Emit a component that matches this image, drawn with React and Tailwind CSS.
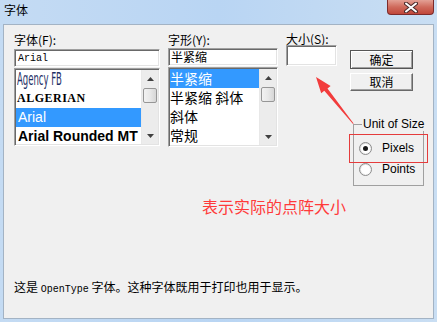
import React from 'react';

const cjk = "font-['SimSun','Noto_Sans_CJK_SC',sans-serif]";

function ScrollBar() {
  return (
    <div className="w-[17px] h-full flex flex-col bg-[#ececec] border-l border-[#e8e8e8]">
      <div className="h-[17px] flex items-center justify-center">
        <svg width="7" height="4" viewBox="0 0 7 4"><polygon points="3.5,0 7,4 0,4" fill="#404040" /></svg>
      </div>
      <div className="mx-[1px] mt-[1px] h-[15px] rounded-[2px] border border-[#969696] bg-gradient-to-r from-[#f2f2f2] via-[#e8e8e8] to-[#d6d6d6]" />
      <div className="flex-1" />
      <div className="h-[17px] flex items-center justify-center">
        <svg width="7" height="4" viewBox="0 0 7 4"><polygon points="0,0 7,0 3.5,4" fill="#404040" /></svg>
      </div>
    </div>
  );
}

function Sunken({ className, children }) {
  return (
    <div className={`border border-t-[#a0a0a0] border-l-[#a0a0a0] border-r-white border-b-white shadow-[inset_1px_1px_0_#696969,inset_-1px_-1px_0_#e3e3e3] bg-white ${className}`}>
      {children}
    </div>
  );
}

function Radio({ checked }) {
  return (
    <div className="w-[13px] h-[13px] rounded-full border border-[#8c8c8c] bg-gradient-to-br from-[#d8d8d8] to-white flex items-center justify-center">
      <div className="w-[9px] h-[9px] rounded-full bg-white flex items-center justify-center">
        {checked && <div className="w-[5px] h-[5px] rounded-full bg-[#1a1a1a]" />}
      </div>
    </div>
  );
}

export default function App() {
  return (
    <div className={`w-[437px] h-[322px] flex flex-col bg-gradient-to-r from-[#c4dbf3] via-[#b9d5f3] to-[#c9def3] ${cjk} text-black`}>
      {/* title bar */}
      <div className="h-[24px] flex items-start shrink-0">
        <div className="ml-[4px] mt-[3px] text-[12px] leading-[14px]">字体</div>
        <div className="ml-auto mr-[3px] w-[47px] h-[15px] rounded-b-[4px] border border-t-0 border-[#7d2b2b] bg-gradient-to-b from-[#e3a095] via-[#cf6a5c] to-[#c0463a] flex items-center justify-center">
          <svg width="14" height="11" viewBox="0 0 14 11">
            <path d="M2 1.5 L12 9.5 M12 1.5 L2 9.5" stroke="#4a2a2a" strokeWidth="4" strokeLinecap="round" />
            <path d="M2 1.5 L12 9.5 M12 1.5 L2 9.5" stroke="#ffffff" strokeWidth="2" strokeLinecap="round" />
          </svg>
        </div>
      </div>

      {/* client */}
      <div className="mx-[3px] mb-[3px] flex-1 bg-[#f0f0f0] border border-[#a3b3c4] relative flex flex-col pl-[10px] pt-[8px]">
        <div className="flex items-start">
          {/* font */}
          <div className="w-[146px] flex flex-col">
            <div className="h-[14px] text-[12px] leading-[14px]">字体(F):</div>
            <Sunken className="mt-[2px] h-[18px] flex items-center pl-[3px]">
              <span className="font-['Liberation_Mono',monospace] text-[10px]">Arial</span>
            </Sunken>
            <Sunken className="mt-[1px] h-[78px] flex p-[1px]">
              <div className="flex-1 flex flex-col overflow-hidden">
                <div className="h-[19px] pl-[1px] leading-[19px] text-[17px] text-[#1d2f66] font-['DejaVu_Sans',sans-serif]">
                  <span className="inline-block origin-left scale-x-[0.5] whitespace-nowrap">Agency FB</span>
                </div>
                <div className="h-[19px] pl-[1px] leading-[19px] text-[12px] font-bold tracking-[0.5px] font-['Liberation_Serif',serif]">ALGERIAN</div>
                <div className="h-[19px] pl-[2px] leading-[19px] text-[14px] bg-[#3399ff] text-white font-['Liberation_Sans',sans-serif]">Arial</div>
                <div className="h-[19px] pl-[2px] leading-[19px] text-[14px] font-bold whitespace-nowrap font-['Liberation_Sans',sans-serif]">Arial Rounded MT</div>
              </div>
              <ScrollBar />
            </Sunken>
          </div>

          {/* style */}
          <div className="ml-[8px] w-[110px] flex flex-col">
            <div className="h-[14px] text-[12px] leading-[14px]">字形(Y):</div>
            <Sunken className="mt-[1px] h-[18px] flex items-center pl-[2px]">
              <span className="text-[12px] leading-[14px]">半紧缩</span>
            </Sunken>
            <Sunken className="mt-[1px] h-[80px] flex p-[1px]">
              <div className="flex-1 flex flex-col overflow-hidden text-[14px]">
                <div className="h-[19px] leading-[19px] bg-[#3399ff] text-white">半紧缩</div>
                <div className="h-[19px] leading-[19px] whitespace-nowrap">半紧缩 斜体</div>
                <div className="h-[19px] leading-[19px]">斜体</div>
                <div className="h-[19px] leading-[19px]">常规</div>
              </div>
              <ScrollBar />
            </Sunken>
          </div>

          {/* size */}
          <div className="ml-[8px] w-[51px] -mt-[1px] flex flex-col">
            <div className="h-[13px] text-[12px] leading-[13px]">大小(S):</div>
            <Sunken className="mt-[0px] h-[21px]" />
          </div>

          {/* buttons + group */}
          <div className="ml-[13px] w-[78px] flex flex-col">
            <div className="mt-[17px] w-[63px] h-[19px] border border-[#555555] bg-[#f0f0f0] shadow-[inset_1px_1px_0_#ffffff,inset_-1px_-1px_0_#a0a0a0] flex items-center justify-center text-[12px]">确定</div>
            <div className="mt-[4px] w-[63px] h-[18px] border border-t-white border-l-white border-r-[#696969] border-b-[#696969] bg-[#f0f0f0] shadow-[inset_-1px_-1px_0_#a0a0a0] flex items-center justify-center text-[12px]">取消</div>

            <div className="relative mt-[33px] ml-[3px] w-[71px] h-[62px] border border-[#a0a0a0] font-['Liberation_Sans',sans-serif] text-[12px]">
              <span className="absolute -top-[8px] left-[8px] px-[1px] bg-[#f0f0f0] leading-[14px] whitespace-nowrap">Unit of Size</span>
              <div className="absolute left-[-5px] top-[9px] w-[79px] h-[29px] border border-[#e53c3c]" />
              <div className="pt-[16px] pl-[5px] flex flex-col">
                <div className="flex items-center h-[14px]">
                  <Radio checked />
                  <span className="ml-[10px] leading-[14px]">Pixels</span>
                </div>
                <div className="flex items-center h-[14px] mt-[7px]">
                  <Radio />
                  <span className="ml-[10px] leading-[14px]">Points</span>
                </div>
              </div>
            </div>
          </div>
        </div>

        {/* annotation */}
        <div className="absolute left-[198px] top-[171px] text-[16px] leading-[20px] text-[#ff3a3a] whitespace-nowrap">表示实际的点阵大小</div>
        <svg className="absolute left-0 top-0 pointer-events-none" width="431" height="295">
          <polygon points="312,52 326.6,60.9 323.5,63.4 349.6,98.6 349,99 320.3,65.8 317.2,68.3" fill="#f23c3c" />
        </svg>

        {/* description */}
        <div className="mt-auto pb-[21px] text-[12px] leading-[14px] whitespace-nowrap">
          这是 <span className="font-['Liberation_Mono',monospace] text-[10px]">OpenType</span> 字体。这种字体既用于打印也用于显示。
        </div>
      </div>
    </div>
  );
}
